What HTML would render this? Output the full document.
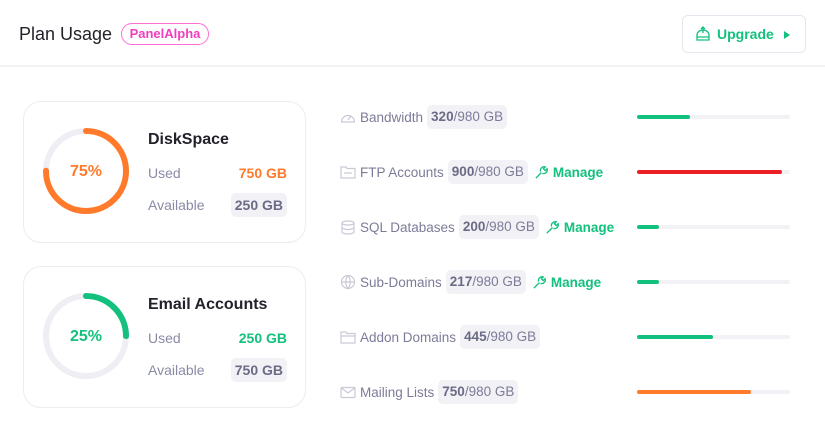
<!DOCTYPE html>
<html><head><meta charset="utf-8"><style>
*{margin:0;padding:0;box-sizing:border-box}
body{width:825px;height:441px;background:#fff;font-family:"Liberation Sans",sans-serif;position:relative;overflow:hidden;color:#2a2a33}
.a{position:absolute}
.hdr{left:0;top:0;width:825px;height:67px;border-bottom:2px solid #f3f3f6}
.title{left:19px;top:24px;font-size:18px;color:#22222a}
.badge{left:121px;top:23px;width:88px;height:22px;border:1px solid #ff6fd3;border-radius:11px;color:#ef3fbf;font-size:13px;font-weight:bold;text-align:center;line-height:20px}
.btn{left:682px;top:15px;width:124px;height:38px;border:1px solid #e6e6ee;border-radius:6px;color:#13c07d;font-weight:bold;font-size:14px}
.card{left:23px;width:283px;height:142px;border:1px solid #ececf1;border-radius:18px}
.ct{font-size:16px;font-weight:bold;color:#22222a}
.lbl{font-size:14px;color:#8a8aa6}
.val{font-size:14px;font-weight:bold;text-align:right}
.chip{background:#f1f1f6;border-radius:5px;padding:4px 4px;color:#6b6b85}
.pct{font-size:16px;font-weight:bold;width:84px;text-align:center}
.row{left:340px;font-size:13.5px;color:#7c7c98;height:24px;display:flex;align-items:center;white-space:nowrap}
.row svg{margin-right:4px}
.rc{background:#f1f1f6;border-radius:5px;padding:0 4px;height:24px;line-height:24px;margin-left:4px;color:#7c7c98}
.rc b{color:#6b6b85}
.mg{color:#13c07d;font-weight:bold;margin-left:6px;display:flex;align-items:center}
.mg svg{margin-right:4px}
.bar{left:637px;width:153px;height:4px;border-radius:2px;background:#f1f1f6}
.bar i{display:block;height:4px;border-radius:2px}
</style></head><body>
<div class="a hdr"></div>
<div class="a title">Plan Usage</div>
<div class="a badge">PanelAlpha</div>
<div class="a btn">
<svg class="a" style="left:12px;top:10px" width="16" height="16" viewBox="0 0 16 16" fill="none" stroke="#13c07d" stroke-width="1.3"><path d="M2 9a6 5 0 0 1 12 0v5H2z M2 11h12 M8 1v6 M6 3l2-2 2 2"/></svg>
<span class="a" style="left:34px;top:10px">Upgrade</span>
<svg class="a" style="left:100px;top:14px" width="8" height="10" viewBox="0 0 8 10"><path d="M1 1l6 4-6 4z" fill="#13c07d"/></svg>
</div>

<div class="a card" style="top:101px"></div>
<svg class="a" style="left:40px;top:125px" width="92" height="92" viewBox="0 0 92 92"><circle cx="46" cy="46" r="40" fill="none" stroke="#eeeef4" stroke-width="6"/><circle cx="46" cy="46" r="40" fill="none" stroke="#ff7a2b" stroke-width="6" stroke-linecap="round" stroke-dasharray="188.5 251.3" transform="rotate(-90 46 46)"/></svg>
<div class="a pct" style="left:44px;top:163px;color:#ff7a2b">75%</div>
<div class="a ct" style="left:148px;top:131px">DiskSpace</div>
<div class="a lbl" style="left:148px;top:165px">Used</div>
<div class="a val" style="left:200px;top:165px;width:87px;color:#ff7a2b">750 GB</div>
<div class="a lbl" style="left:148px;top:197px">Available</div>
<div class="a val" style="left:200px;top:197px;width:87px"><span class="chip">250 GB</span></div>

<div class="a card" style="top:266px"></div>
<svg class="a" style="left:40px;top:290px" width="92" height="92" viewBox="0 0 92 92"><circle cx="46" cy="46" r="40" fill="none" stroke="#eeeef4" stroke-width="6"/><circle cx="46" cy="46" r="40" fill="none" stroke="#13c07d" stroke-width="6" stroke-linecap="round" stroke-dasharray="62.8 251.3" transform="rotate(-90 46 46)"/></svg>
<div class="a pct" style="left:44px;top:328px;color:#13c07d">25%</div>
<div class="a ct" style="left:148px;top:296px">Email Accounts</div>
<div class="a lbl" style="left:148px;top:330px">Used</div>
<div class="a val" style="left:200px;top:330px;width:87px;color:#13c07d">250 GB</div>
<div class="a lbl" style="left:148px;top:362px">Available</div>
<div class="a val" style="left:200px;top:362px;width:87px"><span class="chip">750 GB</span></div>

<div class="a row" style="top:105px"><svg width="16" height="14" viewBox="0 0 16 14" fill="none" stroke="#c9c9d8" stroke-width="1.2"><path d="M1.5 12a6.5 6.5 0 1 1 13 0z M8 10l3-4"/></svg>Bandwidth<span class="rc"><b>320</b>/980 GB</span></div>
<div class="a row" style="top:160px"><svg width="16" height="14" viewBox="0 0 16 14" fill="none" stroke="#c9c9d8" stroke-width="1.2"><path d="M1 2h5l1 1.5h8V13H1z M4 8h8"/></svg>FTP Accounts<span class="rc"><b>900</b>/980 GB</span><span class="mg"><svg width="15" height="15" viewBox="0 0 16 16" fill="none" stroke="#13c07d" stroke-width="1.4"><path d="M2 14l6-6 M9 9a4 4 0 0 0 5-5l-2 2-2-2 2-2a4 4 0 0 0-5 5"/></svg>Manage</span></div>
<div class="a row" style="top:215px"><svg width="16" height="15" viewBox="0 0 16 15" fill="none" stroke="#c9c9d8" stroke-width="1.2"><ellipse cx="8" cy="3" rx="6" ry="2"/><path d="M2 3v9c0 1 2.7 2 6 2s6-1 6-2V3 M2 7.5c0 1 2.7 2 6 2s6-1 6-2"/></svg>SQL Databases<span class="rc"><b>200</b>/980 GB</span><span class="mg"><svg width="15" height="15" viewBox="0 0 16 16" fill="none" stroke="#13c07d" stroke-width="1.4"><path d="M2 14l6-6 M9 9a4 4 0 0 0 5-5l-2 2-2-2 2-2a4 4 0 0 0-5 5"/></svg>Manage</span></div>
<div class="a row" style="top:270px"><svg width="16" height="16" viewBox="0 0 16 16" fill="none" stroke="#c9c9d8" stroke-width="1.2"><circle cx="8" cy="8" r="6.5"/><path d="M1.5 8h13 M8 1.5c-3 3.5-3 9.5 0 13 M8 1.5c3 3.5 3 9.5 0 13"/></svg>Sub-Domains<span class="rc"><b>217</b>/980 GB</span><span class="mg"><svg width="15" height="15" viewBox="0 0 16 16" fill="none" stroke="#13c07d" stroke-width="1.4"><path d="M2 14l6-6 M9 9a4 4 0 0 0 5-5l-2 2-2-2 2-2a4 4 0 0 0-5 5"/></svg>Manage</span></div>
<div class="a row" style="top:325px"><svg width="16" height="14" viewBox="0 0 16 14" fill="none" stroke="#c9c9d8" stroke-width="1.2"><path d="M1 2h5l1 1.5h8V13H1z M1 6h14"/></svg>Addon Domains<span class="rc"><b>445</b>/980 GB</span></div>
<div class="a row" style="top:380px"><svg width="16" height="13" viewBox="0 0 16 13" fill="none" stroke="#c9c9d8" stroke-width="1.2"><rect x="1" y="1.5" width="14" height="10" rx="1"/><path d="M1.5 2l6.5 5 6.5-5"/></svg>Mailing Lists<span class="rc"><b>750</b>/980 GB</span></div>

<div class="a bar" style="top:115px"><i style="width:53px;background:#13c07d"></i></div>
<div class="a bar" style="top:170px"><i style="width:145px;background:#ec1f27"></i></div>
<div class="a bar" style="top:225px"><i style="width:22px;background:#13c07d"></i></div>
<div class="a bar" style="top:280px"><i style="width:22px;background:#13c07d"></i></div>
<div class="a bar" style="top:335px"><i style="width:76px;background:#13c07d"></i></div>
<div class="a bar" style="top:390px"><i style="width:114px;background:#ff7a2b"></i></div>
</body></html>
